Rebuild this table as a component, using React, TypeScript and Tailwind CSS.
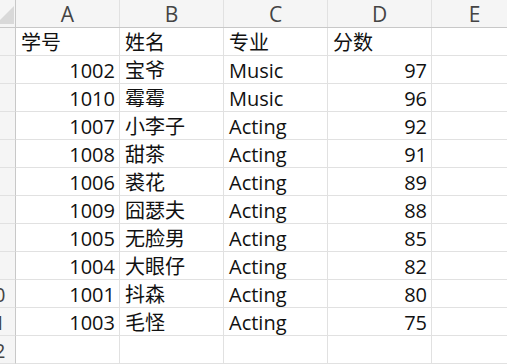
import React from "react";

type Row = { id: string; name: string; major: string; score: string };

const rows: Row[] = [
  { id: "1002", name: "宝爷", major: "Music", score: "97" },
  { id: "1010", name: "霉霉", major: "Music", score: "96" },
  { id: "1007", name: "小李子", major: "Acting", score: "92" },
  { id: "1008", name: "甜茶", major: "Acting", score: "91" },
  { id: "1006", name: "裘花", major: "Acting", score: "89" },
  { id: "1009", name: "囧瑟夫", major: "Acting", score: "88" },
  { id: "1005", name: "无脸男", major: "Acting", score: "85" },
  { id: "1004", name: "大眼仔", major: "Acting", score: "82" },
  { id: "1001", name: "抖森", major: "Acting", score: "80" },
  { id: "1003", name: "毛怪", major: "Acting", score: "75" },
];

const font = { fontFamily: '"Open Sans", "Noto Sans CJK SC", sans-serif' };

const cell = "w-[104px] shrink-0 h-full border-r border-b border-[#e1e1e1] px-[5px] leading-[28px] pt-[1px] whitespace-nowrap overflow-hidden";

// row numbers sit in a column that is scrolled mostly out of view
const RowHead: React.FC<{ n: number }> = ({ n }) => (
  <div className="w-[16px] shrink-0 h-full overflow-hidden bg-[#f5f5f5] border-r border-b border-[#c8c8c8] border-b-[#e1e1e1]">
    <div className="w-[40px] ml-[-26px] text-center leading-[28px] pt-[1px] text-[20px] text-[#444]">{n}</div>
  </div>
);

const App: React.FC = () => {
  const cells = (r?: Row, head?: boolean) => [
    <div key="a" className={`${cell} ${head ? "text-left" : "text-right pr-[4px]"}`}>{head ? "学号" : r?.id}</div>,
    <div key="b" className={cell}>{head ? "姓名" : r?.name}</div>,
    <div key="c" className={cell}>{head ? "专业" : r?.major}</div>,
    <div key="d" className={`${cell} ${head ? "text-left" : "text-right pr-[4px]"}`}>{head ? "分数" : r?.score}</div>,
    <div key="e" className="flex-1 h-full border-b border-[#e1e1e1]" />,
  ];

  return (
    <div className="w-[507px] h-[364px] overflow-hidden bg-white text-[20px] text-[#111]" style={font}>
      {/* column letters */}
      <div className="flex h-[28px] bg-[#f5f5f5] border-b border-[#c8c8c8]">
        <div className="relative w-[16px] shrink-0 h-full border-r border-[#c8c8c8]">
          <svg width="16" height="27" className="absolute left-0 top-0">
            <polygon points="0,20 14,6 14,24 0,24" fill="#d9d9d9" />
          </svg>
        </div>
        {["A", "B", "C", "D"].map((c) => (
          <div key={c} className="w-[104px] shrink-0 h-full border-r border-[#e1e1e1] text-center leading-[28px] text-[21px] text-[#444]">
            {c}
          </div>
        ))}
        <div className="w-[75px] shrink-0 h-full text-center leading-[28px] text-[21px] text-[#444] pl-[10px]">E</div>
      </div>

      <div className="flex h-[28px]">
        <RowHead n={1} />
        {cells(undefined, true)}
      </div>
      {rows.map((r, i) => (
        <div key={r.id} className="flex h-[28px]">
          <RowHead n={i + 2} />
          {cells(r)}
        </div>
      ))}
      <div className="flex h-[28px]">
        <RowHead n={12} />
        <div className={cell} />
        <div className={cell} />
        <div className={cell} />
        <div className={cell} />
        <div className="flex-1 h-full border-b border-[#e1e1e1]" />
      </div>
    </div>
  );
};

export default App;
